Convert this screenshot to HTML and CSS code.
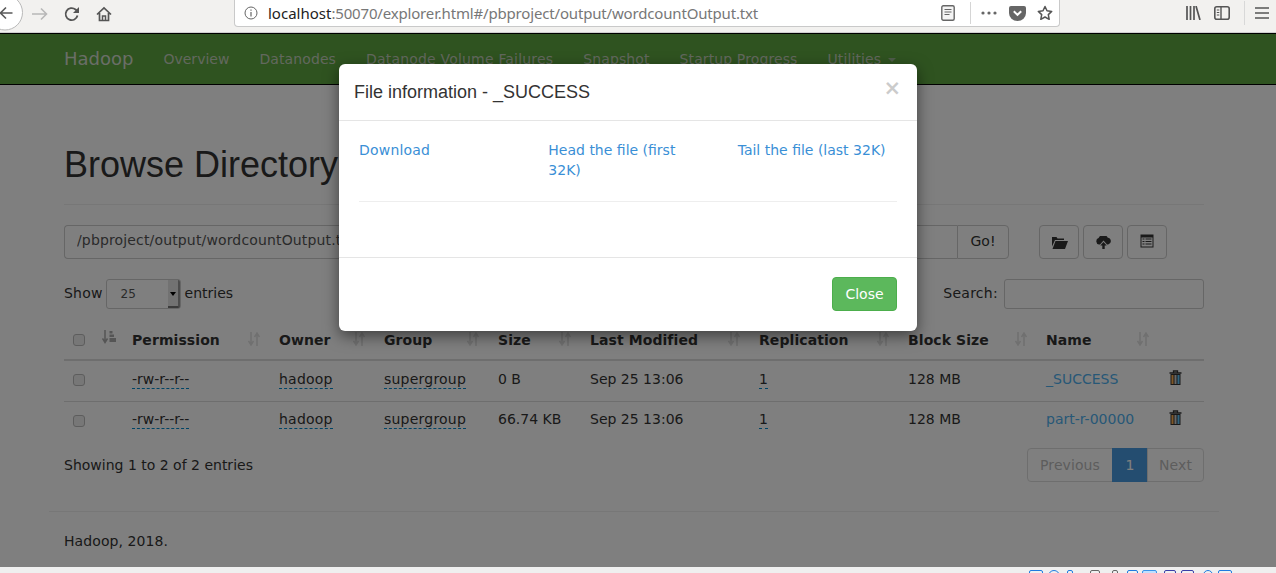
FILE: index.html
```html
<!DOCTYPE html>
<html lang="en">
<head>
<meta charset="utf-8">
<title>Browsing HDFS</title>
<link rel="stylesheet" href="styles.css">
</head>
<body>
<header class="chrome">
  <svg class="ic-back" viewBox="0 0 24 32"><circle cx="5" cy="12.500" r="17.500" fill="#fff" stroke="#b9b9b9"/><path d="M12.500 13H1M6 7.500L.5 13 6 18.500" fill="none" stroke="#5a5a5a" stroke-width="1.600"/></svg>
  <svg class="ic ic-fwd" viewBox="0 0 16 16"><path d="M0 8h14.500M9 2.500L14.500 8 9 13.500" fill="none" stroke="#b8b8b8" stroke-width="1.600"/></svg>
  <svg class="ic ic-reload" viewBox="0 0 16 16"><path d="M13.500 9.500A6 6 0 1 1 11.500 3.500L14 5.500" fill="none" stroke="#555" stroke-width="1.800"/><path d="M15 1v6H9z" fill="#555"/></svg>
  <svg class="ic ic-home" viewBox="0 0 16 16"><path d="M1 8.500L8 2l7 6.500M3.500 7v7.500h9V7" fill="none" stroke="#555" stroke-width="1.700"/><path d="M6.500 14.500V10h3v4.500" fill="none" stroke="#555" stroke-width="1.500"/></svg>
  <div class="urlbar">
    <svg class="ic-info" viewBox="0 0 14 14"><circle cx="7" cy="7" r="6" fill="none" stroke="#666"/><path d="M7 6v4.500M7 3.500v1.300" stroke="#666" stroke-width="1.200"/></svg>
    <span class="url"><span class="url-host">localhost</span>:50070/explorer.html#/pbproject/output/wordcountOutput.txt</span>
    <svg class="ic-reader" viewBox="0 0 14 16"><rect x=".8" y=".8" width="12.400" height="14.400" rx="1.500" fill="#f4f4f4" stroke="#666" stroke-width="1.400"/><path d="M3.500 4.500h7M3.500 7h7M3.500 9.500h5" stroke="#666" stroke-width="1.100"/></svg>
    <span class="url-sep"></span>
    <svg class="ic-dots" viewBox="0 0 16 4"><circle cx="2" cy="2" r="1.600" fill="#666"/><circle cx="8" cy="2" r="1.600" fill="#666"/><circle cx="14" cy="2" r="1.600" fill="#666"/></svg>
    <svg class="ic-pocket" viewBox="0 0 17 15"><path d="M2 0h13a2 2 0 0 1 2 2v5a8.500 8 0 0 1-17 0V2a2 2 0 0 1 2-2z" fill="#666"/><path d="M4.800 5.200L8.500 8.800l3.700-3.600" fill="none" stroke="#fff" stroke-width="2"/></svg>
    <svg class="ic-star" viewBox="0 0 16 16"><path d="M8 1.500l2 4.300 4.700.6-3.400 3.200.9 4.700L8 12l-4.200 2.300.9-4.700L1.300 6.400 6 5.800z" fill="none" stroke="#555" stroke-width="1.500" stroke-linejoin="round"/></svg>
  </div>
  <svg class="ic-lib" viewBox="0 0 15 14"><path d="M1 0v14M4.500 0v14M8 0v14M10 0l4 14" fill="none" stroke="#555" stroke-width="1.700"/></svg>
  <svg class="ic-side" viewBox="0 0 16 14"><rect x=".8" y=".8" width="14.400" height="12.400" rx="2" fill="none" stroke="#555" stroke-width="1.600"/><path d="M7 1v12" stroke="#555" stroke-width="1.400"/><path d="M2.800 4h2.500M2.800 6.500h2.500M2.800 9h2.500" stroke="#555"/></svg>
  <span class="tool-sep"></span>
  <svg class="ic-menu" viewBox="0 0 14 12"><path d="M0 1h14M0 6h14M0 11h14" stroke="#555" stroke-width="1.600"/></svg>
</header>

<div class="page">
  <nav class="navbar">
    <a class="brand">Hadoop</a>
    <a class="nav-link nav-tight">Overview</a>
    <a class="nav-link">Datanodes</a>
    <a class="nav-link nav-wide">Datanode Volume Failures</a>
    <a class="nav-link">Snapshot</a>
    <a class="nav-link">Startup Progress</a>
    <a class="nav-link">Utilities <span class="caret"></span></a>
  </nav>

  <main class="container">
    <div class="page-header"><h1>Browse Directory</h1></div>

    <div class="path-row">
      <div class="input-group">
        <input class="path-input" type="text" value="/pbproject/output/wordcountOutput.txt" readonly>
        <button class="btn go">Go!</button>
      </div>
      <div class="tools">
        <button class="btn tool"><svg class="gly" viewBox="0 0 17 13"><path d="M1 1h4.500l1 1.500h6.500v1.500H4L1 10.500z" fill="#333"/><path d="M4.500 5H17l-3 8H1.500z" fill="#333"/></svg></button>
        <button class="btn tool"><svg class="gly" viewBox="0 0 17 13"><path d="M4 8.500a3.300 3.300 0 0 1-.4-6.400A5 5 0 0 1 12.800 1.800a3.400 3.400 0 0 1 .4 6.700H12L8.500 4.500 5 8.500z" fill="#333"/><path d="M8.500 6l3.200 3.500H9.700V13H7.300V9.500H5.300z" fill="#333"/></svg></button>
        <button class="btn tool"><svg class="gly gly-list" viewBox="0 0 14 14"><rect x=".5" y=".5" width="13" height="13" fill="#333"/><path d="M1.500 3.500h11v9h-11z" fill="#fff"/><path d="M2.500 5h2M5.500 5h6M2.500 7.500h2M5.500 7.500h6M2.500 10h2M5.500 10h6" stroke="#333" stroke-width="1.100"/></svg></button>
      </div>
    </div>

    <div class="controls">
      <div class="length"><span class="ctl-label">Show</span>
        <span class="select"><span class="select-val">25</span><span class="select-arrow"></span></span>
        <span class="ctl-label">entries</span></div>
      <label class="search"><span class="ctl-label search-label">Search:</span> <input class="search-input" type="text"></label>
    </div>

    <table class="files">
      <colgroup>
        <col class="c-check"><col class="c-order"><col class="c-perm"><col class="c-owner"><col class="c-group"><col class="c-size"><col class="c-mod"><col class="c-rep"><col class="c-block"><col class="c-name"><col class="c-act">
      </colgroup>
      <thead>
        <tr>
          <th><input class="check" type="checkbox"></th>
          <th class="sorting"><svg class="sort-active" viewBox="0 0 14 14"><path d="M3 0v11M.5 8.500L3 12.500l2.500-4" fill="none" stroke="#aaa" stroke-width="1.500"/><path d="M7.500 1h3v2.500h-3zM7.500 4.500h4.500V7H7.500zM7.500 8h6.500v4H7.500z" fill="#aaa"/></svg></th>
          <th class="sorting">Permission<svg class="sort" viewBox="0 0 12 14"><path d="M3 0v12M.5 9L3 13l2.500-4M9 14V2M6.500 5L9 1l2.500 4" fill="none" stroke="#e0e0e0" stroke-width="1.500"/></svg></th>
          <th class="sorting">Owner<svg class="sort" viewBox="0 0 12 14"><path d="M3 0v12M.5 9L3 13l2.500-4M9 14V2M6.500 5L9 1l2.500 4" fill="none" stroke="#e0e0e0" stroke-width="1.500"/></svg></th>
          <th class="sorting">Group<svg class="sort" viewBox="0 0 12 14"><path d="M3 0v12M.5 9L3 13l2.500-4M9 14V2M6.500 5L9 1l2.500 4" fill="none" stroke="#e0e0e0" stroke-width="1.500"/></svg></th>
          <th class="sorting">Size<svg class="sort" viewBox="0 0 12 14"><path d="M3 0v12M.5 9L3 13l2.500-4M9 14V2M6.500 5L9 1l2.500 4" fill="none" stroke="#e0e0e0" stroke-width="1.500"/></svg></th>
          <th class="sorting">Last Modified<svg class="sort" viewBox="0 0 12 14"><path d="M3 0v12M.5 9L3 13l2.500-4M9 14V2M6.500 5L9 1l2.500 4" fill="none" stroke="#e0e0e0" stroke-width="1.500"/></svg></th>
          <th class="sorting">Replication<svg class="sort" viewBox="0 0 12 14"><path d="M3 0v12M.5 9L3 13l2.500-4M9 14V2M6.500 5L9 1l2.500 4" fill="none" stroke="#e0e0e0" stroke-width="1.500"/></svg></th>
          <th class="sorting">Block Size<svg class="sort" viewBox="0 0 12 14"><path d="M3 0v12M.5 9L3 13l2.500-4M9 14V2M6.500 5L9 1l2.500 4" fill="none" stroke="#e0e0e0" stroke-width="1.500"/></svg></th>
          <th class="sorting">Name<svg class="sort" viewBox="0 0 12 14"><path d="M3 0v12M.5 9L3 13l2.500-4M9 14V2M6.500 5L9 1l2.500 4" fill="none" stroke="#e0e0e0" stroke-width="1.500"/></svg></th>
          <th></th>
        </tr>
      </thead>
      <tbody>
        <tr>
          <td><input class="check" type="checkbox"></td><td></td>
          <td><span class="edit">-rw-r--r--</span></td>
          <td><span class="edit edit-wide">hadoop</span></td>
          <td><span class="edit edit-wide">supergroup</span></td>
          <td>0 B</td>
          <td>Sep 25 13:06</td>
          <td><span class="edit">1</span></td>
          <td>128 MB</td>
          <td><a class="file-link">_SUCCESS</a></td>
          <td><svg class="trash" viewBox="0 0 13 15"><path d="M.5 3h12M4.500 3V1h4v2" fill="none" stroke="#333" stroke-width="1.300"/><rect x="1.500" y="4" width="10" height="11" fill="#333"/><path d="M3.500 5v9" stroke="#ffb050" stroke-width="2"/><path d="M6.500 5v9" stroke="#d0d0d0" stroke-width="2"/><path d="M9.500 5v9" stroke="#60c8ff" stroke-width="2"/></svg></td>
        </tr>
        <tr>
          <td><input class="check" type="checkbox"></td><td></td>
          <td><span class="edit">-rw-r--r--</span></td>
          <td><span class="edit edit-wide">hadoop</span></td>
          <td><span class="edit edit-wide">supergroup</span></td>
          <td>66.74 KB</td>
          <td>Sep 25 13:06</td>
          <td><span class="edit">1</span></td>
          <td>128 MB</td>
          <td><a class="file-link">part-r-00000</a></td>
          <td><svg class="trash" viewBox="0 0 13 15"><path d="M.5 3h12M4.500 3V1h4v2" fill="none" stroke="#333" stroke-width="1.300"/><rect x="1.500" y="4" width="10" height="11" fill="#333"/><path d="M3.500 5v9" stroke="#ffb050" stroke-width="2"/><path d="M6.500 5v9" stroke="#d0d0d0" stroke-width="2"/><path d="M9.500 5v9" stroke="#60c8ff" stroke-width="2"/></svg></td>
        </tr>
      </tbody>
    </table>

    <div class="table-foot">
      <div>Showing 1 to 2 of 2 entries</div>
      <div class="pagination">
        <a class="page-item first">Previous</a><a class="page-item active">1</a><a class="page-item last">Next</a>
      </div>
    </div>

    <footer class="footer">Hadoop, 2018.</footer>
  </main>

  <div class="backdrop"></div>

  <section class="modal">
    <div class="modal-header">
      <h4 class="modal-title">File information - _SUCCESS</h4>
      <span class="close">×</span>
    </div>
    <div class="modal-body">
      <div class="modal-links">
        <a class="modal-link modal-link-wide">Download</a>
        <a class="modal-link">Head the file (first 32K)</a>
        <a class="modal-link">Tail the file (last 32K)</a>
      </div>
      <hr class="modal-rule">
    </div>
    <div class="modal-footer"><button class="btn-close">Close</button></div>
  </section>
</div>

<div class="taskstrip">
  <i class="ti w14"></i><i class="ti w12 round"></i><i class="ti w6 gap-s"></i><i class="ti w10 grey gap-l"></i><i class="ti w6 grey gap-xl"></i><i class="ti w11 gap-m"></i><i class="ti w15 fill"></i><i class="ti w12 navy gap-s"></i><i class="ti w13 navy"></i><i class="ti w10 round gap-m"></i><i class="ti w14"></i>
</div>
</body>
</html>
```
FILE: styles.css
```css
* { box-sizing: border-box; }
html, body { margin: 0; padding: 0; }
body {
  width: 1276px;
  height: 573px;
  overflow: hidden;
  background: #fff;
  color: #333;
  font: 14px/20px "DejaVu Sans", sans-serif;
}

/* browser chrome */
.chrome {
  display: flex;
  align-items: center;
  height: 33px;
  background: #f2f1ef;
  border-bottom: 1px solid #cfcfcf;
  overflow: hidden;
}
.ic-back { width: 24px; height: 32px; flex: none; }
.ic { width: 16px; height: 16px; flex: none; margin-top: -5px; }
.ic-fwd { margin-left: 8px; }
.ic-reload { margin-left: 16px; }
.ic-home { margin-left: 16px; }
.urlbar {
  display: flex;
  align-items: center;
  align-self: flex-start;
  width: 826px;
  height: 27px;
  margin-left: 122px;
  background: #fff;
  border: 1px solid #c9c9c9;
  border-top: 0;
  border-radius: 0 0 4px 4px;
}
.ic-info { width: 14px; height: 14px; margin-left: 9px; flex: none; }
.url {
  margin-left: 10px;
  width: 662px;
  font: 15px/26px "Noto Sans", sans-serif;
  letter-spacing: -.17px;
  color: #777;
  white-space: nowrap;
}
.url-host { color: #222; letter-spacing: 0; }
.ic-reader { width: 14px; height: 16px; flex: none; margin-left: 11px; }
.url-sep { width: 1px; height: 22px; background: #d5d5d5; margin-left: 15px; flex: none; }
.ic-dots { width: 16px; height: 4px; flex: none; margin-left: 10px; }
.ic-pocket { width: 17px; height: 15px; flex: none; margin-left: 12px; }
.ic-star { width: 16px; height: 16px; flex: none; margin-left: 11px; }
.ic-lib { width: 15px; height: 14px; flex: none; margin: -7px 0 0 126px; }
.ic-side { width: 16px; height: 14px; flex: none; margin: -7px 0 0 13px; }
.tool-sep { width: 1px; height: 24px; background: #d8d8d8; flex: none; margin: -6px 0 0 14px; }
.ic-menu { width: 14px; height: 12px; flex: none; margin: -7px 0 0 10px; }

/* page behind the dialog */
.page {
  position: relative;
  height: 534px;
  overflow: hidden;
  background: #fff;
}
.navbar {
  display: flex;
  align-items: center;
  height: 52px;
  padding-left: 64px;
  background: #5ea640;
  border-top: 1px solid #000;
  border-bottom: 1px solid #000;
}
.brand { font-size: 18px; color: #d4dccf; margin-right: 15px; }
.nav-link { color: #c4d0bc; padding: 0 15px; white-space: nowrap; letter-spacing: .108px; }
.nav-tight { letter-spacing: 0; }
.nav-wide { letter-spacing: .19px; }
.caret {
  display: inline-block;
  width: 0;
  height: 0;
  margin-left: 2px;
  vertical-align: middle;
  border-top: 4px solid #9fb894;
  border-left: 4px solid transparent;
  border-right: 4px solid transparent;
}

.container { width: 1170px; margin-left: 49px; padding: 0 15px; }
.page-header { margin: 60px 0 20px; padding-bottom: 19px; border-bottom: 1px solid #eee; }
h1 {
  margin: 0;
  font: 500 36px/40px "Liberation Sans", Arial, sans-serif;
  color: #333;
}

.path-row { display: flex; height: 34px; }
.input-group { display: flex; width: 945px; }
.path-input {
  flex: 1;
  min-width: 0;
  padding: 4px 12px 8px;
  font: 14px/20px "DejaVu Sans", sans-serif;
  letter-spacing: .15px;
  color: #555;
  background: #fff;
  border: 1px solid #ccc;
  border-right: 0;
  border-radius: 4px 0 0 4px;
  outline: 0;
}
.btn {
  height: 34px;
  padding: 0;
  font: 14px/20px "DejaVu Sans", sans-serif;
  color: #333;
  background: #fff;
  border: 1px solid #ccc;
  border-radius: 4px;
}
.go { width: 52px; padding-bottom: 2px; border-radius: 0 4px 4px 0; }
.tools { display: flex; gap: 4px; margin-left: 30px; }
.tool { display: flex; align-items: center; justify-content: center; width: 40px; }
.gly { width: 17px; height: 13px; }
.gly-list { width: 14px; height: 14px; margin-top: -2px; }

.controls {
  display: flex;
  justify-content: space-between;
  align-items: center;
  height: 30px;
  margin-top: 20px;
}
.length { display: flex; align-items: center; gap: 4px; }
.ctl-label { margin-top: -2px; }
.length .ctl-label:first-child { letter-spacing: .2px; margin-right: -1px; }
.search-label { letter-spacing: .28px; }
.select {
  display: flex;
  width: 75px;
  height: 30px;
  background: #fff;
  border: 1px solid #ccc;
  border-radius: 3px;
  overflow: hidden;
}
.select-val { flex: 1; padding-left: 14px; font-size: 12px; line-height: 28px; color: #555; }
.select-arrow {
  position: relative;
  width: 12px;
  background: #e4e4e4;
  border-right: 2px solid #999;
  border-bottom: 2px solid #777;
}
.select-arrow::after {
  content: "";
  position: absolute;
  left: 2px;
  top: 12px;
  border-top: 4px solid #000;
  border-left: 3px solid transparent;
  border-right: 3px solid transparent;
}
.search { display: flex; align-items: center; gap: 6px; }
.search-input {
  width: 200px;
  height: 30px;
  background: #fff;
  border: 1px solid #ccc;
  border-radius: 3px;
}

.files {
  width: 1140px;
  margin-top: 12px;
  table-layout: fixed;
  border-collapse: collapse;
}
.c-check { width: 30px; }
.c-order { width: 30px; }
.c-perm { width: 147px; }
.c-owner { width: 105px; }
.c-group { width: 114px; }
.c-size { width: 92px; }
.c-mod { width: 169px; }
.c-rep { width: 149px; }
.c-block { width: 138px; }
.c-name { width: 122px; }
.c-act { width: 44px; }
.files th {
  position: relative;
  height: 39px;
  padding: 8px;
  text-align: left;
  font-weight: 700;
  letter-spacing: .08px;
  border-bottom: 2px solid #ddd;
  white-space: nowrap;
}
.files td {
  height: 41px;
  padding: 8px;
  vertical-align: top;
  border-bottom: 1px solid #ddd;
  white-space: nowrap;
}
.files tbody tr:last-child td { padding-top: 7px; border-bottom: 0; }
.check {
  appearance: none;
  display: block;
  width: 12px;
  height: 12px;
  margin: 5px 0 0 1px;
  background: #eee;
  border: 1px solid #bbb;
  border-radius: 3px;
}
.files th .check { margin-top: -1px; }
.files tbody tr:last-child .check { margin-top: 6px; }
.sort { position: absolute; right: 11px; top: 11px; width: 12px; height: 14px; }
.sort-active { position: absolute; left: 8px; top: 9px; width: 14px; height: 14px; }
.edit { padding-bottom: 1px; border-bottom: 1px dashed #08c; }
.edit-wide { letter-spacing: .22px; }
.file-link { color: #4fb0ee; }
.trash { display: block; width: 13px; height: 15px; margin: 1px 0 0 1px; }

.table-foot {
  display: flex;
  justify-content: space-between;
  align-items: center;
  height: 34px;
  margin-top: 6px;
}
.pagination { display: flex; }
.page-item {
  height: 34px;
  padding: 6px 0;
  text-align: center;
  color: #bbb;
  letter-spacing: .08px;
  background: #fff;
  border: 1px solid #ddd;
  margin-left: -1px;
}
.first { width: 86px; border-radius: 4px 0 0 4px; }
.last { width: 57px; border-radius: 0 4px 4px 0; }
.active { width: 36px; color: #fff; background: #489ae0; border-color: #489ae0; }
.footer {
  margin: 29px -15px 0;
  padding: 19px 15px 0;
  border-top: 1px solid #eee;
  letter-spacing: .08px;
}

/* dialog */
.backdrop { position: absolute; inset: 0; background: rgba(0, 0, 0, .5); }
.modal {
  position: absolute;
  left: 339px;
  top: 31px;
  width: 578px;
  height: 267px;
  background: #fff;
  border-radius: 6px;
  box-shadow: 0 5px 15px rgba(0, 0, 0, .5);
}
.modal-header {
  display: flex;
  justify-content: space-between;
  height: 57px;
  padding: 16px 16px 0 15px;
  border-bottom: 1px solid #e5e5e5;
}
.modal-title {
  margin: 0;
  font: 500 18px/25px "Liberation Sans", Arial, sans-serif;
  color: #333;
}
.close {
  margin-top: -2px;
  font: 700 21px/21px "DejaVu Sans", sans-serif;
  color: #000;
  opacity: .2;
}
.modal-body { height: 136px; padding: 19px 20px 20px; }
.modal-links {
  display: grid;
  grid-template-columns: repeat(3, 1fr);
  margin: 0 -15px;
}
.modal-link { padding: 0 15px; color: #3a8fd6; }
.modal-link-wide { letter-spacing: .2px; }
.modal-rule { margin: 21px 0 0; border: 0; border-top: 1px solid #eee; }
.modal-footer {
  display: flex;
  justify-content: flex-end;
  padding: 19px 20px 0;
  border-top: 1px solid #e5e5e5;
}
.btn-close {
  width: 65px;
  height: 34px;
  padding: 0;
  font: 14px/20px "DejaVu Sans", sans-serif;
  color: #fff;
  background: #5cb85c;
  border: 1px solid #4cae4c;
  border-radius: 4px;
}

/* desktop strip under the window */
.taskstrip {
  display: flex;
  gap: 5px;
  height: 6px;
  padding: 3px 0 0 1029px;
  background: #efefef;
  overflow: hidden;
}
.ti { display: block; flex: none; height: 8px; border: 1px solid #1f7be0; border-radius: 2px; }
.w6 { width: 6px; }
.w10 { width: 10px; }
.w11 { width: 11px; }
.w12 { width: 12px; }
.w13 { width: 13px; }
.w14 { width: 14px; }
.w15 { width: 15px; }
.round { border-radius: 7px 7px 0 0; }
.grey { border-color: #666; }
.navy { border-color: #3a3fa8; }
.fill { margin-left: -1px; background: #bfe0ff; border-color: #3a93e8; }
.gap-s { margin-left: 2px; }
.gap-m { margin-left: 4px; }
.gap-l { margin-left: 12px; }
.gap-xl { margin-left: 7px; }
```
